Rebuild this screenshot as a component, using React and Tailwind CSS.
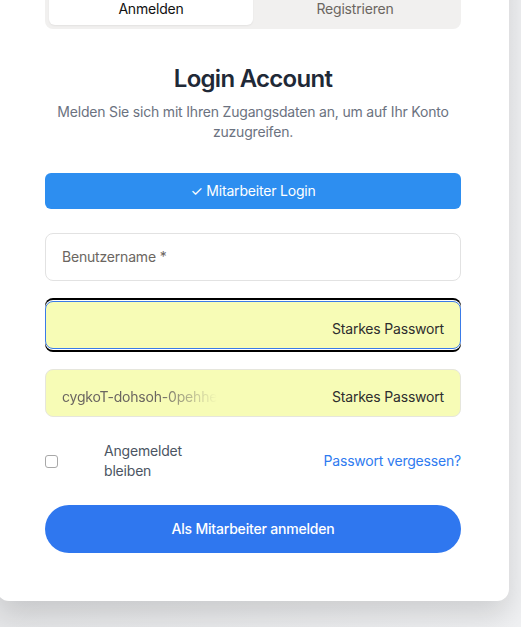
import React from "react";

export default function App() {
  return (
    <div
      className="w-[521px] h-[627px] overflow-hidden bg-gradient-to-r from-[#e6e7e9] to-[#f0f1f3] tracking-[-0.012em]"
      style={{ fontFamily: "Inter, 'Noto Sans', sans-serif" }}
    >
      <div className="ml-[-3px] mt-[-59px] w-[512px] bg-white rounded-xl px-12 pt-12 pb-12 shadow-[0_14px_30px_rgba(0,0,0,0.14)]">
        {/* Tabs */}
        <div className="flex rounded-lg bg-[#f1f0ef] p-1">
          <div className="flex-1 h-8 flex items-center justify-center rounded-md bg-white text-sm text-[#111] shadow-[0_1px_2px_rgba(0,0,0,0.06)]">
            Anmelden
          </div>
          <div className="flex-1 h-8 flex items-center justify-center text-sm text-[#6b6661]">
            Registrieren
          </div>
        </div>

        <h1 className="mt-[34px] text-center text-2xl leading-8 font-semibold tracking-[-0.03em] text-[#1f2937]">
          Login Account
        </h1>
        <p className="mt-[7px] text-center text-sm leading-5 text-[#6b7280]">
          Melden Sie sich mit Ihren Zugangsdaten an, um auf Ihr Konto zuzugreifen.
        </p>

        <button className="mt-[31px] w-full h-9 rounded-md bg-[#2d8ef0] text-white text-sm flex items-center justify-center">
          ✓ Mitarbeiter Login
        </button>

        <div className="mt-6 h-12 w-full rounded-lg border border-[#e2e2e2] bg-white flex items-center px-4 text-sm text-[#6b6661]">
          Benutzername *
        </div>

        <div className="mt-5 h-12 w-full rounded-lg border border-[#3a7be8] bg-[#f7fcb6] flex items-center justify-end px-4 text-sm text-[#2e2e2e] shadow-[0_-1px_0_0_#fff,0_-3px_0_0_#000,0_1px_0_0_#fff,0_3px_0_0_#000]">
          <span className="pt-[8px]">Starkes Passwort</span>
        </div>

        <div className="mt-5 h-12 w-full rounded-lg border border-[#e6e6dc] bg-[#f7fcb6] flex items-center justify-between px-4 text-sm">
          <span className="pt-[8px] inline-block text-[#6b6661] [mask-image:linear-gradient(to_right,black_62%,transparent_100%)]">
            cygkoT-dohsoh-0pehhe
          </span>
          <span className="pt-[8px] text-[#2e2e2e]">Starkes Passwort</span>
        </div>

        <div className="mt-6 flex items-center justify-between">
          <div className="flex items-center">
            <span className="w-[13px] h-[13px] rounded-[3px] border border-[#a8a8a8] bg-white" />
            <span className="ml-[46px] w-[96px] text-sm leading-5 text-[#4b5563]">
              Angemeldet bleiben
            </span>
          </div>
          <a className="text-sm text-[#2f7bf0]">Passwort vergessen?</a>
        </div>

        <button className="mt-6 w-full h-12 rounded-full bg-[#2f77ef] text-white text-sm font-medium flex items-center justify-center">
          Als Mitarbeiter anmelden
        </button>
      </div>
    </div>
  );
}
